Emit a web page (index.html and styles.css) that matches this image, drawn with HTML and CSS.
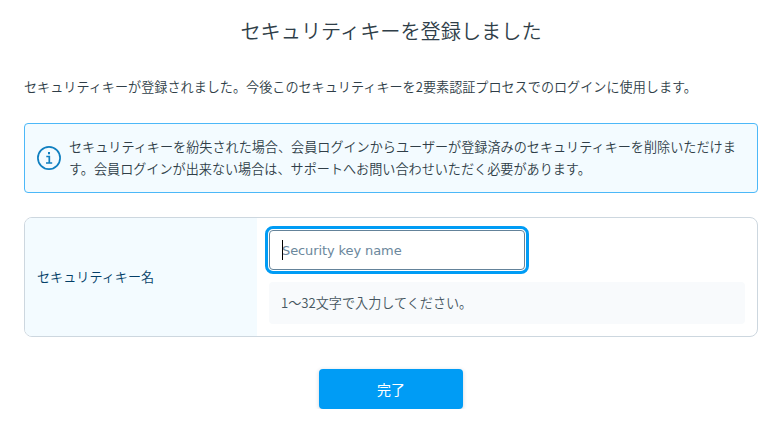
FILE: index.html
```html
<!DOCTYPE html>
<html lang="ja">
<head>
    <meta charset="UTF-8">
    <meta name="viewport" content="width=device-width, initial-scale=1.0">
    <title>セキュリティキーを登録しました</title>
    <link rel="stylesheet" href="styles.css">
</head>

<body>
    <div class="container">
        <h1 class="title">セキュリティキーを登録しました</h1>
        <p class="lead">セキュリティキーが登録されました。今後このセキュリティキーを2要素認証プロセスでのログインに使用します。</p>
        <div class="notice">
            <svg class="notice-icon" width="24" height="24" viewBox="0 0 24 24" fill="none" stroke="#0f7fc0">
                <circle cx="12" cy="12" r="11.1" stroke-width="1.7" />
                <path d="M9.3 10.5h3v6.3M9 17h6.2" stroke-width="1.7" />
                <path d="M12 6v2.2" stroke-width="2" />
            </svg>
            <p class="notice-text">セキュリティキーを紛失された場合、会員ログインからユーザーが登録済みのセキュリティキーを削除いただけま<br>す。会員ログインが出来ない場合は、サポートへお問い合わせいただく必要があります。</p>
        </div>
        <div class="form-row">
            <label class="form-label" for="keyname">セキュリティキー名</label>
            <div class="form-body">
                <div class="field">
                    <input type="text" id="keyname" class="input" placeholder="Security key name">
                    <span class="caret"></span>
                </div>
                <p class="hint">1～32文字で入力してください。</p>
            </div>
        </div>
        <button type="button" class="btn">完了</button>
    </div>
</body>

</html>
```
FILE: styles.css
```css
* {
    margin: 0;
    padding: 0;
    box-sizing: border-box;
}

body {
    background-color: #fff;
    color: #2f3e48;
    font-family: "Noto Sans CJK JP", sans-serif;
    font-size: 13.12px;
    font-weight: 350;
    line-height: 22px;
}

.container {
    width: 734px;
    margin-left: 24px;
    padding-top: 15px;
}

.title {
    font-size: 20.16px;
    font-weight: 350;
    line-height: 32px;
    text-align: center;
}

.lead {
    margin-top: 29px;
    white-space: nowrap;
}

.notice {
    display: flex;
    align-items: center;
    height: 70px;
    margin-top: 25px;
    padding-left: 12px;
    border: 1px solid #4cb8f8;
    border-radius: 4px;
    background-color: #f3fbff;
}

.notice-icon {
    flex: none;
    margin-right: 8px;
}

.notice-text {
    white-space: nowrap;
}

.form-row {
    display: flex;
    height: 120px;
    margin-top: 24px;
    border: 1px solid #cdd7df;
    border-radius: 8px;
    overflow: hidden;
}

.form-label {
    display: flex;
    align-items: center;
    width: 232px;
    padding-left: 12px;
    background-color: #f3fbff;
    color: #033f68;
}

.form-body {
    flex: 1;
    padding: 12px;
}

.field {
    position: relative;
    width: 256px;
    height: 40px;
}

.input {
    display: block;
    width: 100%;
    height: 100%;
    padding: 0 12px;
    border: 1px solid #64839a;
    border-radius: 4px;
    /* 白い隙間をはさんだフォーカス枠 */
    outline: 3px solid #009cf5;
    outline-offset: 1px;
    background-color: #fff;
    font-family: "DejaVu Sans", sans-serif;
    font-size: 13px;
    letter-spacing: -0.1px;
}

.input::placeholder {
    color: #6b879c;
}

.caret {
    position: absolute;
    left: 13px;
    top: 10px;
    width: 1px;
    height: 20px;
    background-color: #000;
}

.hint {
    height: 42px;
    margin-top: 12px;
    padding-left: 12px;
    border-radius: 4px;
    background-color: #f8fafc;
    color: #465660;
    line-height: 42px;
}

.btn {
    display: block;
    width: 144px;
    height: 40px;
    margin: 32px auto 0;
    border: none;
    border-radius: 4px;
    background-color: #009cf5;
    box-shadow: 0 1px 4px rgba(0, 40, 80, 0.2);
    color: #fff;
    font-family: inherit;
    font-size: 14px;
}
```
